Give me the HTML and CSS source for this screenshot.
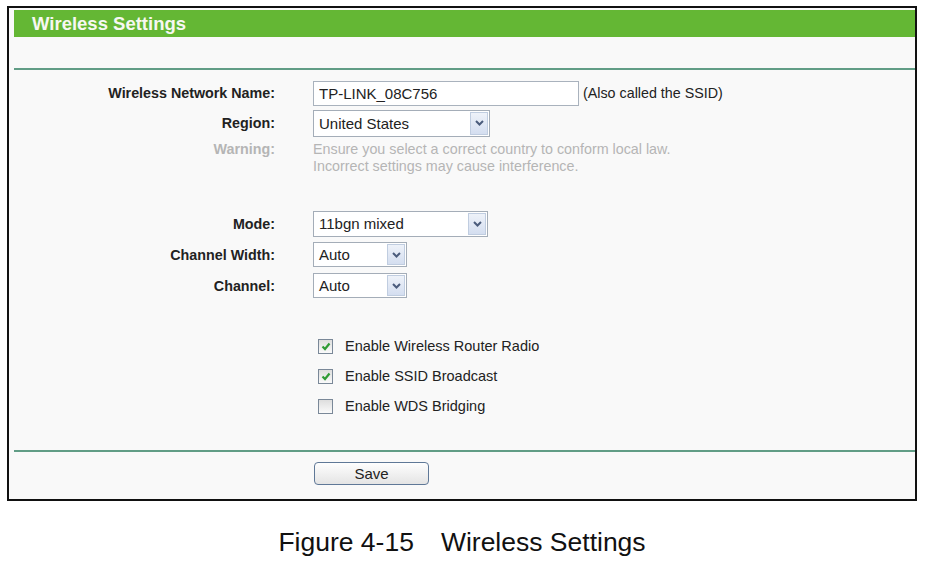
FILE: index.html
```html
<!DOCTYPE html>
<html lang="en">
<head>
  <meta charset="UTF-8" />
  <title>Wireless Settings</title>
  <link rel="stylesheet" href="styles.css">
</head>
<body>
  <div class="frame">
    <div class="title">Wireless Settings</div>
    <div class="rule top"></div>

    <div class="form">
      <div class="row">
        <span class="label">Wireless Network Name:</span>
        <input class="text" type="text" value="TP-LINK_08C756" />
        <span class="hint">(Also called the SSID)</span>
      </div>
      <div class="row">
        <span class="label">Region:</span>
        <div class="select region">
          <span class="value">United States</span>
          <span class="arrow"><svg width="9" height="6" viewBox="0 0 9 6"><path d="M1 1 L4.5 4.5 L8 1" fill="none" stroke="#4b5c7c" stroke-width="2"/></svg></span>
        </div>
      </div>
      <div class="warn">
        <span class="label">Warning:</span>
        <div class="warn-text">
          Ensure you select a correct country to conform local law.<br>
          Incorrect settings may cause interference.
        </div>
      </div>

      <div class="row wide first">
        <span class="label">Mode:</span>
        <div class="select mode">
          <span class="value">11bgn mixed</span>
          <span class="arrow"><svg width="9" height="6" viewBox="0 0 9 6"><path d="M1 1 L4.5 4.5 L8 1" fill="none" stroke="#4b5c7c" stroke-width="2"/></svg></span>
        </div>
      </div>
      <div class="row wide">
        <span class="label">Channel Width:</span>
        <div class="select small">
          <span class="value">Auto</span>
          <span class="arrow"><svg width="9" height="6" viewBox="0 0 9 6"><path d="M1 1 L4.5 4.5 L8 1" fill="none" stroke="#4b5c7c" stroke-width="2"/></svg></span>
        </div>
      </div>
      <div class="row wide">
        <span class="label">Channel:</span>
        <div class="select small">
          <span class="value">Auto</span>
          <span class="arrow"><svg width="9" height="6" viewBox="0 0 9 6"><path d="M1 1 L4.5 4.5 L8 1" fill="none" stroke="#4b5c7c" stroke-width="2"/></svg></span>
        </div>
      </div>

      <div class="checks">
        <div class="check">
          <span class="box"><svg width="10" height="9" viewBox="0 0 10 9"><path d="M1.5 4.5 L4 7 L8.5 1.5" fill="none" stroke="#2f9b35" stroke-width="2.2"/></svg></span>
          Enable Wireless Router Radio
        </div>
        <div class="check">
          <span class="box"><svg width="10" height="9" viewBox="0 0 10 9"><path d="M1.5 4.5 L4 7 L8.5 1.5" fill="none" stroke="#2f9b35" stroke-width="2.2"/></svg></span>
          Enable SSID Broadcast
        </div>
        <div class="check">
          <span class="box"></span>
          Enable WDS Bridging
        </div>
      </div>
    </div>

    <div class="rule bottom"></div>
    <div class="actions">
      <button class="save">Save</button>
    </div>
  </div>

  <div class="caption"><span class="fig-num">Figure 4-15</span>Wireless Settings</div>
</body>
</html>
```

FILE: styles.css
```css
body {
  margin: 0;
  background: #fff;
  font-family: "Liberation Sans", Arial, sans-serif;
  color: #222;
}

.frame {
  width: 901px;
  margin: 6px 0 0 7px;
  padding: 2px 0 0 5px;
  border: 2px solid #111;
  background: #f9f9f9;
}

.title {
  height: 27px;
  line-height: 27px;
  padding-left: 18px;
  background: #64b734;
  color: #f7f7f2;
  font-size: 18.5px;
  font-weight: bold;
}

.rule {
  height: 2px;
  background: #619d86;
}

.rule.top {
  margin-top: 31px;
}

.rule.bottom {
  margin-top: 29px;
}

.form {
  padding-top: 8px;
}

.row {
  display: flex;
  align-items: center;
  height: 30px;
}

.row.wide {
  height: 31px;
}

.row.first {
  margin-top: 33px;
}

.label {
  flex: none;
  width: 261px;
  margin-right: 38px;
  text-align: right;
  font-size: 14.3px;
  font-weight: bold;
}

.text {
  box-sizing: border-box;
  width: 266px;
  height: 25px;
  margin: 0;
  padding: 0 5px;
  border: 1px solid #a9b2bd;
  background: #fff;
  font-family: "Liberation Sans", Arial, sans-serif;
  font-size: 15px;
  color: #222;
}

.hint {
  margin-left: 4px;
  font-size: 14.3px;
}

.select {
  display: flex;
  box-sizing: border-box;
  padding: 1px;
  border: 1px solid #a4adb8;
  background: #fff;
  font-size: 15px;
}

.select .value {
  flex: 1;
  display: flex;
  align-items: center;
  padding-left: 4px;
}

.select .arrow {
  display: flex;
  align-items: center;
  justify-content: center;
  box-sizing: border-box;
  width: 18px;
  border: 1px solid #c0cde0;
  background: linear-gradient(#eef2f9, #d4def0);
}

.select.region {
  width: 177px;
  height: 27px;
}

.select.mode {
  width: 175px;
  height: 26px;
}

.select.small {
  width: 94px;
  height: 25px;
}

.warn {
  display: flex;
  margin-top: 3px;
  line-height: 17px;
  color: #b5b5b5;
  font-size: 14.3px;
}

.warn .label {
  font-size: 14.3px;
}

.checks {
  margin: 30px 0 0 304px;
}

.check {
  display: flex;
  align-items: center;
  height: 30px;
  font-size: 14.5px;
}

.box {
  display: flex;
  align-items: center;
  justify-content: center;
  width: 13px;
  height: 13px;
  margin-right: 12px;
  border: 1px solid #7a8898;
  background: linear-gradient(#dedede, #fafafa);
}

.actions {
  padding: 10px 0 14px 300px;
}

.save {
  box-sizing: border-box;
  width: 115px;
  height: 23px;
  padding: 0;
  border: 1px solid #5f7897;
  border-radius: 4px;
  background: linear-gradient(#fefefe, #e4e4e4);
  font-family: "Liberation Sans", Arial, sans-serif;
  font-size: 15px;
  color: #222;
}

.caption {
  width: 910px;
  margin: 26px 0 0 7px;
  text-align: center;
  font-size: 26.5px;
  line-height: 30px;
  color: #111;
}

.fig-num {
  margin-right: 27px;
}
```
